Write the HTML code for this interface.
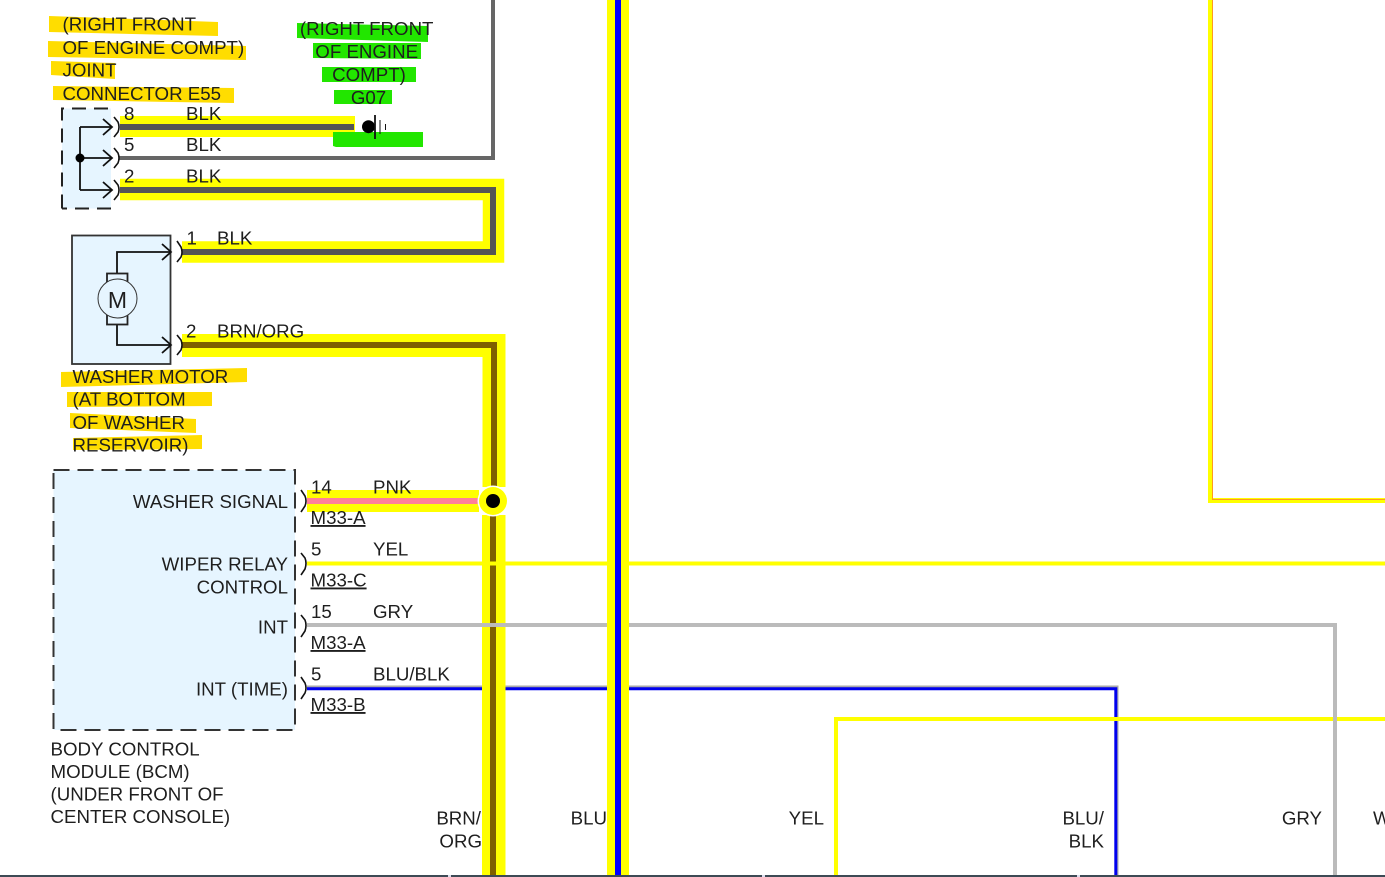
<!DOCTYPE html>
<html>
<head>
<meta charset="utf-8">
<style>
html,body{margin:0;padding:0;background:#fff;width:1385px;height:877px;overflow:hidden}
svg{display:block}
text{font-family:"Liberation Sans",Arial,sans-serif;font-size:18.7px;fill:#1e1e1e}
.r{text-anchor:end}
.m{text-anchor:middle}
</style>
</head>
<body>
<svg width="1385" height="877" viewBox="0 0 1385 877" xmlns="http://www.w3.org/2000/svg">
<rect width="1385" height="877" fill="#fff"/>

<!-- Gold highlights -->
<g fill="#ffdd00">
<polygon points="49,16 218,22 218,36 49,32"/>
<polygon points="48,41 246,46 246,60 48,57"/>
<polygon points="51,61 115,63 115,79 51,75"/>
<polygon points="53,86 234,88 234,103 53,100"/>
<polygon points="61,372 247,368 247,382 61,387"/>
<polygon points="67,392 212,392 212,406 67,407"/>
<polygon points="70,413 196,419 196,433 70,428"/>
<polygon points="73,438 202,435 202,449 73,450"/>
</g>

<!-- Top-right yellow wire -->
<path d="M1210.5 0V500.5H1385" fill="none" stroke="#ffff00" stroke-width="5"/>
<path d="M1212.5 0V499.5H1385" fill="none" stroke="#ff9a20" stroke-width="1"/>

<!-- Gray wire 5 -->
<path d="M119 158H493V0" fill="none" stroke="#666" stroke-width="4"/>

<!-- BLK wire 8 -->
<rect x="120" y="116" width="235" height="21" fill="#ffff00"/>
<rect x="120" y="124" width="234" height="6" fill="#555"/>

<!-- BLK wires 2 / 1 -->
<path d="M120 189.500H493.500V252H182" fill="none" stroke="#ffff00" stroke-width="21.500"/>
<path d="M120 190H493V252H182" fill="none" stroke="#555" stroke-width="6"/>

<!-- BLU/BLK wire -->
<path d="M307 686.500H1117.500V875" fill="none" stroke="#aaa" stroke-width="2"/>
<path d="M307 688.700H1115.800V875" fill="none" stroke="#0000ee" stroke-width="3"/>

<!-- BRN/ORG wire -->
<path d="M182 345.500H494V487" fill="none" stroke="#ffff00" stroke-width="23"/>
<path d="M182 345H494V487" fill="none" stroke="#7f6000" stroke-width="6"/>
<rect x="482" y="515" width="23.500" height="362" fill="#ffff00"/>
<rect x="490" y="515" width="6" height="362" fill="#7f6000"/>

<!-- PNK wire -->
<rect x="307" y="490" width="172" height="22" fill="#ffff00"/>
<rect x="307" y="498" width="172" height="6" fill="#ff8099"/>

<!-- Junction -->
<circle cx="493" cy="501" r="15.500" fill="#fff"/>
<circle cx="493" cy="501" r="14" fill="#ffff00"/>
<circle cx="493" cy="501" r="7" fill="#000"/>

<!-- YEL and GRY horizontal -->
<rect x="307" y="561.500" width="1078" height="4" fill="#ffff00"/>
<path d="M307 625H1335V877" fill="none" stroke="#bbb" stroke-width="4"/>

<!-- Lower yellow wire -->
<path d="M836 877V719H1333" fill="none" stroke="#ffff00" stroke-width="4"/>
<rect x="1337" y="717" width="48" height="4" fill="#ffff00"/>

<!-- BLU vertical -->
<rect x="607" y="0" width="22" height="877" fill="#ffff00"/>
<rect x="615" y="0" width="6" height="877" fill="#0000ff"/>

<!-- Connector E55 -->
<rect x="62" y="108.500" width="49" height="100" fill="#e6f5ff"/>
<path d="M62 208.500V108.500H111M111 208.500H62" fill="none" stroke="#222" stroke-width="2" stroke-dasharray="14 8"/>
<path d="M80 127V190M80 127H111M80 158H111M80 190H111" fill="none" stroke="#111" stroke-width="1.800"/>
<path d="M103 119L112 127L103 135M103 150L112 158L103 166M103 182L112 190L103 198" fill="none" stroke="#111" stroke-width="1.800"/>
<circle cx="80" cy="158" r="4.500" fill="#000"/>
<path d="M114 117L118 122Q120 127 118 132L114 137M114 148L118 153Q120 158 118 163L114 168M114 180L118 185Q120 190 118 195L114 200" fill="none" stroke="#111" stroke-width="1.600"/>

<!-- Motor -->
<rect x="72" y="235.500" width="98.500" height="128.500" fill="#e6f5ff" stroke="#333" stroke-width="1.800"/>
<path d="M117 273V252H171M117 324V345H171" fill="none" stroke="#111" stroke-width="1.800"/>
<path d="M162 244L171 252L162 260M162 337L171 345L162 353" fill="none" stroke="#111" stroke-width="1.800"/>
<rect x="107" y="273.500" width="20.500" height="51" fill="none" stroke="#222" stroke-width="1.800"/>
<circle cx="117.500" cy="298.500" r="19.500" fill="#e6f5ff" stroke="#333" stroke-width="1"/>
<text x="117.500" y="308" class="m" style="font-size:23px">M</text>
<path d="M177 241L181 247Q183 252 181 257L177 262M177 335L181 340Q183 345 181 350L177 355" fill="none" stroke="#111" stroke-width="1.600"/>

<!-- BCM -->
<rect x="53.500" y="470" width="241.500" height="260" fill="#e6f5ff"/>
<rect x="53.500" y="470" width="241.500" height="260" fill="none" stroke="#333" stroke-width="2" stroke-dasharray="16 8"/>
<path d="M301 490L305 496Q307 501 305 506L301 512M301 553L305 558Q307 563 305 569L301 575M301 615L305 620Q307 625 305 631L301 637M301 677L305 683Q307 688 305 693L301 699" fill="none" stroke="#111" stroke-width="1.600"/>

<!-- Green highlights -->
<g fill="#22e600">
<polygon points="297,23 428,26 428,42 297,38"/>
<polygon points="313,43 421,43 421,59 313,58"/>
<polygon points="322,67 416,67 416,82 322,82"/>
<polygon points="334,90 392,90 392,104 334,104"/>
<polygon points="333,132 423,132 423,147 336,147 333,146"/>
</g>

<!-- Ground -->
<circle cx="368.500" cy="126.700" r="6.500" fill="#000"/>
<path d="M375 115V139" stroke="#111" stroke-width="1.800"/>
<path d="M380 120V134M385.500 124V130" stroke="#111" stroke-width="1"/>

<!-- Text -->
<text x="62.500" y="30.500">(RIGHT FRONT</text>
<text x="62.500" y="54">OF ENGINE COMPT)</text>
<text x="62.500" y="76.500">JOINT</text>
<text x="62.500" y="100">CONNECTOR E55</text>

<text x="366.700" y="35" class="m">(RIGHT FRONT</text>
<text x="366.700" y="58" class="m">OF ENGINE</text>
<text x="369" y="81" class="m">COMPT)</text>
<text x="368.500" y="104" class="m">G07</text>

<text x="124" y="120">8</text><text x="186" y="120">BLK</text>
<text x="124" y="151">5</text><text x="186" y="151">BLK</text>
<text x="124" y="182.500">2</text><text x="186" y="182.500">BLK</text>
<text x="186.500" y="244.500">1</text><text x="217" y="244.500">BLK</text>
<text x="186" y="337.500">2</text><text x="217" y="337.500">BRN/ORG</text>

<text x="72.500" y="383">WASHER MOTOR</text>
<text x="72.500" y="405.500">(AT BOTTOM</text>
<text x="72.500" y="429">OF WASHER</text>
<text x="72.500" y="451.500">RESERVOIR)</text>

<text x="288" y="508" class="r">WASHER SIGNAL</text>
<text x="288" y="570.500" class="r">WIPER RELAY</text>
<text x="288" y="593.500" class="r">CONTROL</text>
<text x="288" y="633.500" class="r">INT</text>
<text x="288" y="695.500" class="r">INT (TIME)</text>

<text x="311" y="493.500">14</text><text x="373" y="493.500">PNK</text>
<text x="310.500" y="524" text-decoration="underline">M33-A</text>
<text x="311" y="555.500">5</text><text x="373" y="555.500">YEL</text>
<text x="310.500" y="586.500" text-decoration="underline">M33-C</text>
<text x="311" y="618">15</text><text x="373" y="618">GRY</text>
<text x="310.500" y="649" text-decoration="underline">M33-A</text>
<text x="311" y="680.500">5</text><text x="373" y="680.500">BLU/BLK</text>
<text x="310.500" y="711" text-decoration="underline">M33-B</text>

<text x="50.500" y="755.500">BODY CONTROL</text>
<text x="50.500" y="778">MODULE (BCM)</text>
<text x="50.500" y="800.500">(UNDER FRONT OF</text>
<text x="50.500" y="823">CENTER CONSOLE)</text>

<text x="481" y="824.500" class="r">BRN/</text>
<text x="482" y="847.500" class="r">ORG</text>
<text x="607" y="824.500" class="r">BLU</text>
<text x="824" y="824.500" class="r">YEL</text>
<text x="1104" y="824.500" class="r">BLU/</text>
<text x="1104" y="847.500" class="r">BLK</text>
<text x="1322" y="824.500" class="r">GRY</text>
<text x="1373" y="824.500">W</text>

<!-- Bottom bar -->
<rect x="0" y="875" width="1385" height="2" fill="#3d4a55"/>
<rect x="448" y="875" width="3" height="2" fill="#dde"/>
<rect x="762" y="875" width="3" height="2" fill="#dde"/>
<rect x="1077" y="875" width="3" height="2" fill="#dde"/>
</svg>
</body>
</html>
